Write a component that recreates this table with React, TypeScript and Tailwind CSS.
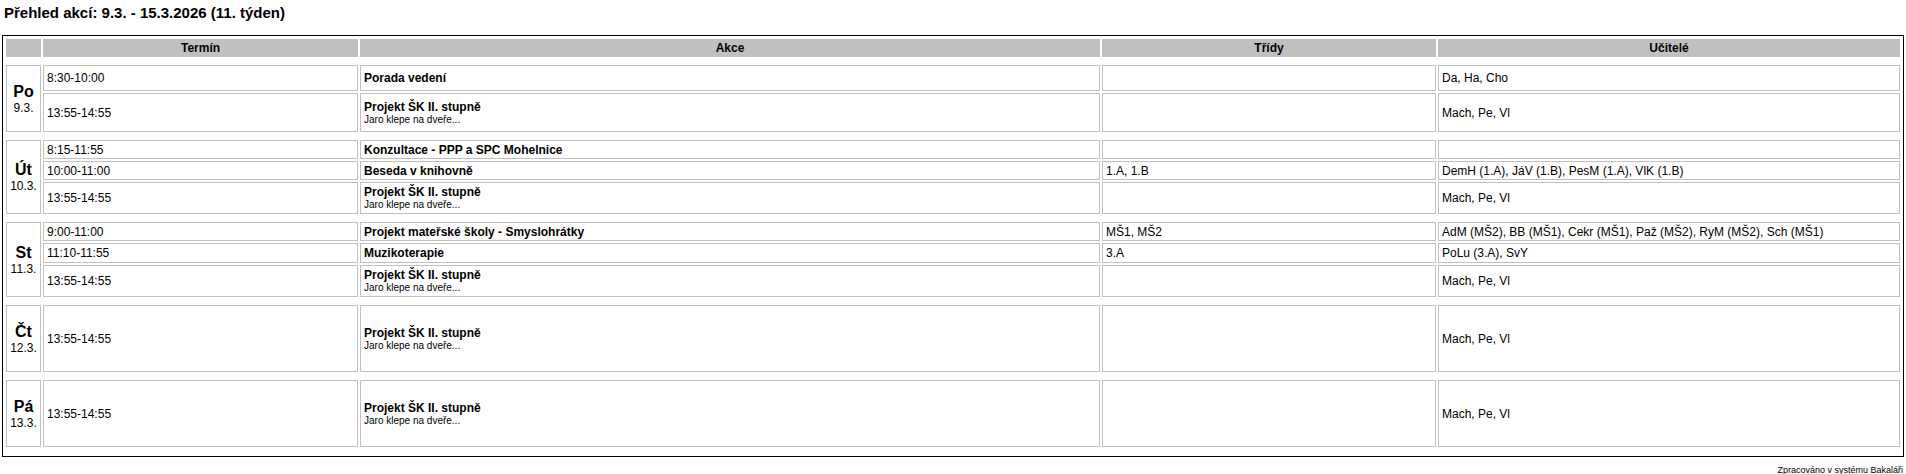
import React from 'react';

type Row = {
  time: string;
  title: string;
  sub?: string;
  classes: string;
  teachers: string;
  h: string;
};

type Day = {
  name: string;
  date: string;
  rows: Row[];
};

const SUB = 'Jaro klepe na dveře...';

const DAYS: Day[] = [
  {
    name: 'Po',
    date: '9.3.',
    rows: [
      { time: '8:30-10:00', title: 'Porada vedení', classes: '', teachers: 'Da, Ha, Cho', h: 'h-[26px]' },
      { time: '13:55-14:55', title: 'Projekt ŠK II. stupně', sub: SUB, classes: '', teachers: 'Mach, Pe, Vl', h: 'h-[39px]' },
    ],
  },
  {
    name: 'Út',
    date: '10.3.',
    rows: [
      { time: '8:15-11:55', title: 'Konzultace - PPP a SPC Mohelnice', classes: '', teachers: '', h: 'h-[19px]' },
      { time: '10:00-11:00', title: 'Beseda v knihovně', classes: '1.A, 1.B', teachers: 'DemH (1.A), JáV (1.B), PesM (1.A), VlK (1.B)', h: 'h-[19px]' },
      { time: '13:55-14:55', title: 'Projekt ŠK II. stupně', sub: SUB, classes: '', teachers: 'Mach, Pe, Vl', h: 'h-[32px]' },
    ],
  },
  {
    name: 'St',
    date: '11.3.',
    rows: [
      { time: '9:00-11:00', title: 'Projekt mateřské školy - Smyslohrátky', classes: 'MŠ1, MŠ2', teachers: 'AdM (MŠ2), BB (MŠ1), Cekr (MŠ1), Paž (MŠ2), RyM (MŠ2), Sch (MŠ1)', h: 'h-[19px]' },
      { time: '11:10-11:55', title: 'Muzikoterapie', classes: '3.A', teachers: 'PoLu (3.A), SvY', h: 'h-[20px]' },
      { time: '13:55-14:55', title: 'Projekt ŠK II. stupně', sub: SUB, classes: '', teachers: 'Mach, Pe, Vl', h: 'h-[32px]' },
    ],
  },
  {
    name: 'Čt',
    date: '12.3.',
    rows: [
      { time: '13:55-14:55', title: 'Projekt ŠK II. stupně', sub: SUB, classes: '', teachers: 'Mach, Pe, Vl', h: 'h-[67px]' },
    ],
  },
  {
    name: 'Pá',
    date: '13.3.',
    rows: [
      { time: '13:55-14:55', title: 'Projekt ŠK II. stupně', sub: SUB, classes: '', teachers: 'Mach, Pe, Vl', h: 'h-[67px]' },
    ],
  },
];

const cell = 'border border-[#c0c0c0] px-[3px] py-0 align-middle text-[12px] leading-[14px]';
const head = 'border border-[#c0c0c0] bg-[#c0c0c0] p-0 text-center text-[12px] font-bold leading-[14px]';

const Spacer = () => (
  <tr className="h-[4px]">
    <td colSpan={5} className="p-0" />
  </tr>
);

const App = () => {
  return (
    <div className="min-h-screen bg-white px-[2px] pt-[4px] font-['Liberation_Sans',Arial,sans-serif] text-black">
      <h1 className="pl-[2px] text-[15px] font-bold leading-[17px]">Přehled akcí: 9.3. - 15.3.2026 (11. týden)</h1>
      <table className="mt-[14px] w-full table-fixed border-separate border-spacing-[2px] border border-black p-[1px]">
        <colgroup>
          <col className="w-[35px]" />
          <col className="w-[315px]" />
          <col className="w-[740px]" />
          <col className="w-[334px]" />
          <col />
        </colgroup>
        <tbody>
          <tr className="h-[18px]">
            <td className={head}></td>
            <td className={head}>Termín</td>
            <td className={head}>Akce</td>
            <td className={head}>Třídy</td>
            <td className={head}>Učitelé</td>
          </tr>
          {DAYS.map((day) => (
            <React.Fragment key={day.name}>
              <Spacer />
              {day.rows.map((r, i) => (
                <tr key={i} className={r.h}>
                  {i === 0 && (
                    <td rowSpan={day.rows.length} className="border border-[#c0c0c0] p-0 text-center align-middle">
                      <div className="text-[16px] font-bold leading-[18px]">{day.name}</div>
                      <div className="text-[12px] leading-[14px]">{day.date}</div>
                    </td>
                  )}
                  <td className={cell}>{r.time}</td>
                  <td className={cell}>
                    <div className="font-bold">{r.title}</div>
                    {r.sub && <div className="text-[10px] leading-[12px]">{r.sub}</div>}
                  </td>
                  <td className={cell}>{r.classes}</td>
                  <td className={cell}>{r.teachers}</td>
                </tr>
              ))}
            </React.Fragment>
          ))}
          <Spacer />
        </tbody>
      </table>
      <div className="mt-[8px] pr-[1px] text-right text-[9px] leading-[10px]">Zpracováno v systému Bakaláři</div>
    </div>
  );
};

export default App;
